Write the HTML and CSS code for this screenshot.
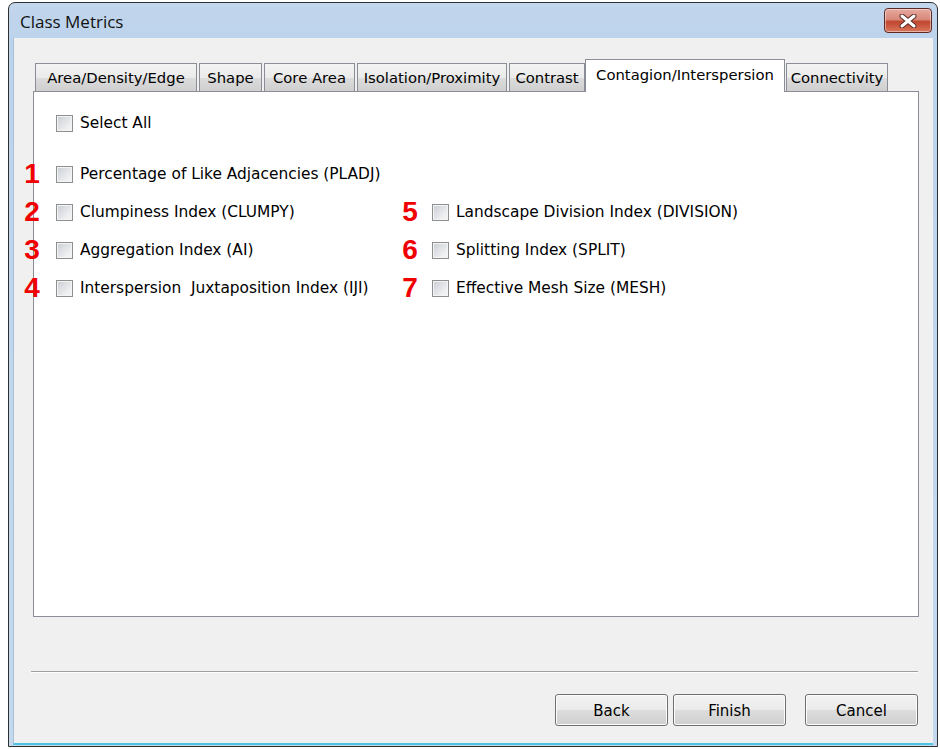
FILE: index.html
```html
<!DOCTYPE html>
<html lang="en">
<head>
    <meta charset="UTF-8">
    <title>Class Metrics</title>
    <link rel="stylesheet" href="styles.css">
</head>
<body>
    <div class="window">
        <div class="titlebar">
            <span class="title">Class Metrics</span>
            <button class="close-btn" aria-label="Close">
                <svg width="20" height="14" viewBox="0 0 20 14">
                    <path d="M4 2 L16 12 M16 2 L4 12" stroke="#5a2a25" stroke-width="5" stroke-linecap="round"/>
                    <path d="M4 2 L16 12 M16 2 L4 12" stroke="#ffffff" stroke-width="3" stroke-linecap="round"/>
                </svg>
            </button>
        </div>

        <div class="client">
            <div class="tabs-area">
                <div class="tabs">
                    <div class="tab tab-area">Area/Density/Edge</div>
                    <div class="tab tab-shape">Shape</div>
                    <div class="tab tab-core">Core Area</div>
                    <div class="tab tab-isolation">Isolation/Proximity</div>
                    <div class="tab tab-contrast">Contrast</div>
                    <div class="tab tab-contagion active">Contagion/Interspersion</div>
                    <div class="tab tab-connectivity">Connectivity</div>
                </div>

                <div class="panel">
                    <label class="check select-all"><span class="box"></span>Select All</label>

                    <div class="metrics">
                        <div class="col">
                            <label class="check"><span class="num">1</span><span class="box"></span>Percentage of Like Adjacencies (PLADJ)</label>
                            <label class="check"><span class="num">2</span><span class="box"></span>Clumpiness Index (CLUMPY)</label>
                            <label class="check"><span class="num">3</span><span class="box"></span>Aggregation Index (AI)</label>
                            <label class="check"><span class="num">4</span><span class="box"></span>Interspersion&nbsp; Juxtaposition Index (IJI)</label>
                        </div>
                        <div class="col col-right">
                            <label class="check"><span class="num">5</span><span class="box"></span>Landscape Division Index (DIVISION)</label>
                            <label class="check"><span class="num">6</span><span class="box"></span>Splitting Index (SPLIT)</label>
                            <label class="check"><span class="num">7</span><span class="box"></span>Effective Mesh Size (MESH)</label>
                        </div>
                    </div>
                </div>
            </div>

            <div class="separator"></div>

            <div class="buttons">
                <button class="btn">Back</button>
                <button class="btn">Finish</button>
                <button class="btn btn-cancel">Cancel</button>
            </div>
        </div>
    </div>
</body>
</html>
```

FILE: styles.css
```css
* {
    box-sizing: border-box;
}
body {
    margin: 0;
    background-color: #fff;
    font-family: "DejaVu Sans", sans-serif;
    font-size: 15px;
    color: #000;
}
.window {
    margin: 2px 0 0 8px;
    width: 930px;
    height: 745px;
    border: 1px solid #2f2f2f;
    border-radius: 7px 7px 0 0;
    background: linear-gradient(#c2d6ec, #bcd3ec 40px, #c4d9ee);
    padding: 0 4px 1px 4px;
    display: flex;
    flex-direction: column;
}
.titlebar {
    height: 35px;
    display: flex;
    justify-content: space-between;
    align-items: flex-start;
}
.title {
    font-family: "Open Sans", sans-serif;
    font-size: 17px;
    margin: 7px 0 0 7px;
    color: #111;
}
.close-btn {
    margin: 5px 1px 0 0;
    width: 48px;
    height: 25px;
    border: 1px solid #5e2a25;
    border-radius: 4px;
    background: linear-gradient(#e6a99d, #d88a7b 45%, #c1452e 55%, #d8775c);
    box-shadow: inset 0 0 0 1px rgba(255, 255, 255, 0.45);
    display: flex;
    align-items: center;
    justify-content: center;
    padding: 0;
}
.client {
    flex: 1;
    background-color: #f0f0f0;
    border-bottom: 2px solid #4cc4e6;
    border-left: 1px solid #a9bfd6;
}
.tabs-area {
    padding: 21px 14px 0 19px;
}
.tabs {
    display: flex;
    align-items: flex-end;
    padding-left: 2px;
    position: relative;
    z-index: 1;
}
.tab {
    height: 28px;
    padding-top: 5px;
    margin-right: 2px;
    border: 1px solid #8b8e96;
    border-bottom: none;
    background: linear-gradient(#f3f3f3, #ebebeb 50%, #dcdcdc 51%, #cfcfcf);
    white-space: nowrap;
    text-align: center;
    font-size: 14.8px;
}
.tab-area { width: 162px; }
.tab-shape { width: 63px; }
.tab-core { width: 91px; }
.tab-isolation { width: 150px; }
.tab-contrast { width: 76px; }
.tab-contagion { width: 200px; }
.tab-connectivity { width: 102px; }
.tab.active {
    height: 33px;
    margin: 0 1px -1px -2px;
    padding-top: 6px;
    background: #fff;
}
.panel {
    height: 526px;
    border: 1px solid #8b8e96;
    background-color: #fff;
    padding: 12px 0 0 22px;
    font-size: 15.4px;
}
.check {
    position: relative;
    display: flex;
    align-items: center;
    height: 38px;
    white-space: nowrap;
}
.box {
    width: 17px;
    height: 17px;
    margin-right: 7px;
    border: 1px solid #8e8f8f;
    background: linear-gradient(135deg, #c9cdd3, #eceef0 70%, #f6f6f6);
    box-shadow: inset 0 0 0 1px #f4f4f4;
}
.select-all {
    margin-bottom: 13px;
}
.metrics {
    display: flex;
}
.col {
    width: 376px;
}
.col-right {
    padding-top: 38px;
}
.num {
    position: absolute;
    left: -33px;
    width: 18px;
    text-align: center;
    font-family: "Liberation Sans", sans-serif;
    font-weight: bold;
    font-size: 28px;
    color: #f00000;
}
.col-right .num {
    left: -31px;
}
.separator {
    margin: 54px 15px 0 17px;
    border-top: 1px solid #a0a0a0;
    border-bottom: 1px solid #fff;
}
.buttons {
    display: flex;
    justify-content: flex-end;
    gap: 5px;
    margin-top: 21px;
    padding-right: 15px;
}
.btn {
    width: 113px;
    height: 32px;
    border: 1px solid #707070;
    border-radius: 3px;
    background: linear-gradient(#f2f2f2, #ebebeb 50%, #dddddd 51%, #cfcfcf);
    box-shadow: inset 0 0 0 1px #fcfcfc;
    font-family: "DejaVu Sans", sans-serif;
    font-size: 15px;
    color: #000;
    padding: 2px 0 0 0;
}
.btn-cancel {
    margin-left: 14px;
}
```
